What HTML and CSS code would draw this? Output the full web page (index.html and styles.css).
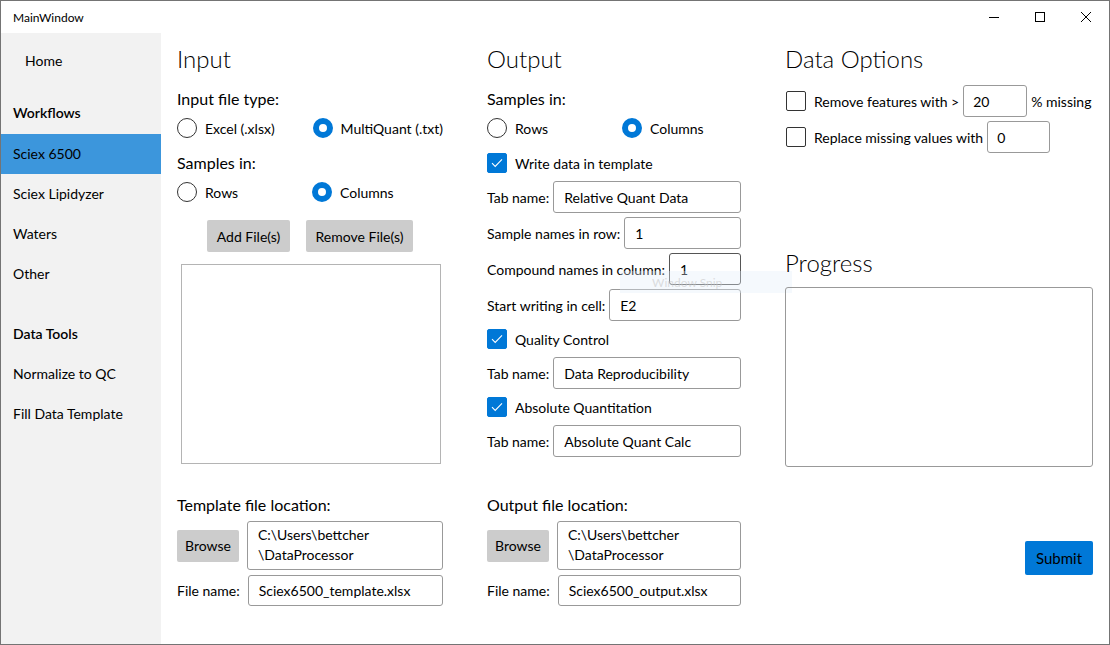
FILE: index.html
```html
<!DOCTYPE html>
<html lang="en">
<head>
<meta charset="utf-8">
<title>MainWindow</title>
<link rel="stylesheet" href="styles.css">
</head>
<body>
<div class="window">
  <header class="titlebar">
    <span class="title">MainWindow</span>
    <div class="caption-buttons">
      <span class="cap-btn"><svg width="10" height="10" viewBox="0 0 10 10"><path d="M0 5.5H10" stroke="#000" stroke-width="1"/></svg></span>
      <span class="cap-btn"><svg width="10" height="10" viewBox="0 0 10 10"><rect x="0.5" y="0.5" width="9" height="9" fill="none" stroke="#000" stroke-width="1"/></svg></span>
      <span class="cap-btn"><svg width="10" height="10" viewBox="0 0 10 10"><path d="M0 0L10 10M10 0L0 10" stroke="#000" stroke-width="1"/></svg></span>
    </div>
  </header>
  <div class="body">
    <nav class="sidebar">
      <div class="nav-item nav-home">Home</div>
      <div class="nav-group">Workflows</div>
      <div class="nav-item nav-selected">Sciex 6500</div>
      <div class="nav-item">Sciex Lipidyzer</div>
      <div class="nav-item">Waters</div>
      <div class="nav-item">Other</div>
      <div class="nav-group nav-group-2">Data Tools</div>
      <div class="nav-item">Normalize to QC</div>
      <div class="nav-item">Fill Data Template</div>
    </nav>
    <main class="content">
      <section class="col col-input">
        <div class="top">
          <h1 class="heading">Input</h1>
          <div class="label-lg first-label">Input file type:</div>
          <div class="radio-row">
            <label class="radio in-w1"><span class="radio-dot"></span>Excel (.xlsx)</label>
            <label class="radio"><span class="radio-dot checked"></span>MultiQuant (.txt)</label>
          </div>
          <div class="label-lg second-label">Samples in:</div>
          <div class="radio-row">
            <label class="radio in-w2"><span class="radio-dot"></span>Rows</label>
            <label class="radio"><span class="radio-dot checked"></span>Columns</label>
          </div>
          <div class="button-row">
            <button class="btn btn-add">Add File(s)</button>
            <button class="btn btn-remove">Remove File(s)</button>
          </div>
          <div class="listbox"></div>
        </div>
        <div class="bottom">
          <div class="label-lg">Template file location:</div>
          <div class="browse-row">
            <button class="btn btn-browse">Browse</button>
            <div class="textbox path-box">C:\Users\bettcher<br>\DataProcessor</div>
          </div>
          <div class="field-row file-row">
            <span class="field-label">File name:</span>
            <div class="textbox">Sciex6500_template.xlsx</div>
          </div>
        </div>
      </section>

      <section class="col col-output">
        <div class="top">
          <h1 class="heading">Output</h1>
          <div class="label-lg first-label">Samples in:</div>
          <div class="radio-row">
            <label class="radio out-w1"><span class="radio-dot"></span>Rows</label>
            <label class="radio"><span class="radio-dot checked"></span>Columns</label>
          </div>
          <label class="check check-first"><span class="check-box checked"><svg width="12" height="10" viewBox="0 0 12 10"><path d="M1 5.2L4.2 8.4L11 1.4" fill="none" stroke="#fff" stroke-width="1.1"/></svg></span>Write data in template</label>
          <div class="field-row gap6">
            <span class="field-label">Tab name:</span>
            <div class="textbox">Relative Quant Data</div>
          </div>
          <div class="field-row gap4">
            <span class="field-label">Sample names in row:</span>
            <div class="textbox">1</div>
          </div>
          <div class="field-row gap4">
            <span class="field-label">Compound names in column:</span>
            <div class="textbox focused">1</div>
          </div>
          <div class="field-row gap4">
            <span class="field-label">Start writing in cell:</span>
            <div class="textbox">E2</div>
          </div>
          <label class="check check-mid"><span class="check-box checked"><svg width="12" height="10" viewBox="0 0 12 10"><path d="M1 5.2L4.2 8.4L11 1.4" fill="none" stroke="#fff" stroke-width="1.1"/></svg></span>Quality Control</label>
          <div class="field-row gap6">
            <span class="field-label">Tab name:</span>
            <div class="textbox">Data Reproducibility</div>
          </div>
          <label class="check check-mid"><span class="check-box checked"><svg width="12" height="10" viewBox="0 0 12 10"><path d="M1 5.2L4.2 8.4L11 1.4" fill="none" stroke="#fff" stroke-width="1.1"/></svg></span>Absolute Quantitation</label>
          <div class="field-row gap6">
            <span class="field-label">Tab name:</span>
            <div class="textbox">Absolute Quant Calc</div>
          </div>
        </div>
        <div class="bottom">
          <div class="label-lg">Output file location:</div>
          <div class="browse-row">
            <button class="btn btn-browse">Browse</button>
            <div class="textbox path-box">C:\Users\bettcher<br>\DataProcessor</div>
          </div>
          <div class="field-row file-row">
            <span class="field-label">File name:</span>
            <div class="textbox">Sciex6500_output.xlsx</div>
          </div>
        </div>
        <div class="snip-overlay"><span>Window Snip</span></div>
      </section>

      <section class="col col-data">
        <h1 class="heading">Data Options</h1>
        <div class="option-row option-first">
          <span class="check-box"></span>
          <span class="option-text">Remove features with &gt;</span>
          <div class="textbox small-box w64">20</div>
          <span class="option-after">% missing</span>
        </div>
        <div class="option-row option-second">
          <span class="check-box"></span>
          <span class="option-text">Replace missing values with</span>
          <div class="textbox small-box w63">0</div>
        </div>
        <h1 class="heading progress-heading">Progress</h1>
        <div class="progress-box"></div>
        <button class="btn-submit">Submit</button>
      </section>
    </main>
  </div>
</div>
</body>
</html>
```

FILE: styles.css
```css
* { box-sizing: border-box; }

html, body {
  margin: 0;
  padding: 0;
  background: #ffffff;
}

body {
  font-family: "Segoe UI", Lato, "Open Sans", sans-serif;
  font-size: 14px;
  color: #000;
}

.window {
  width: 1110px;
  height: 645px;
  border: 1px solid #747474;
  display: flex;
  flex-direction: column;
  background: #fff;
  overflow: hidden;
}

.titlebar {
  height: 32px;
  display: flex;
  align-items: center;
  justify-content: space-between;
  flex-shrink: 0;
}

.title {
  font-size: 12px;
  padding-left: 12px;
}

.caption-buttons {
  display: flex;
  height: 32px;
}

.cap-btn {
  width: 46px;
  height: 32px;
  display: flex;
  align-items: center;
  justify-content: center;
}

.cap-btn svg { display: block; }

.body {
  flex: 1;
  display: flex;
  min-height: 0;
}

/* Sidebar */
.sidebar {
  width: 160px;
  background: #f2f2f2;
  padding-top: 8px;
  flex-shrink: 0;
}

.nav-item, .nav-group {
  height: 40px;
  display: flex;
  align-items: center;
  padding-left: 12px;
  padding-bottom: 2px;
}

.nav-home {
  padding-left: 24px;
}

.nav-group {
  font-weight: 600;
  margin-top: 12px;
  margin-bottom: 1px;
}

.nav-group-2 {
  margin-top: 20px;
  margin-bottom: 0;
}

.nav-selected {
  background: #3c96dc;
}

/* Content */
.content {
  flex: 1;
  display: flex;
  padding: 0 16px 0 16px;
  gap: 44px;
}

.col {
  display: flex;
  flex-direction: column;
  padding-top: 10px;
  padding-bottom: 38px;
  position: relative;
}

.col-input { width: 266px; }
.col-output { width: 254px; }
.col-data { width: 308px; padding-bottom: 0; }

.col .bottom {
  margin-top: auto;
  display: flex;
  flex-direction: column;
}

.heading {
  margin: 0;
  height: 32px;
  line-height: 32px;
  font-size: 24px;
  font-weight: 300;
}

.label-lg {
  font-size: 16px;
  height: 24px;
  line-height: 24px;
}

.first-label { margin-top: 12px; }
.second-label { margin-top: 9px; }

.radio-row {
  display: flex;
  height: 28px;
  align-items: center;
  margin-top: 3px;
}

.radio {
  display: flex;
  align-items: center;
  gap: 8px;
  white-space: nowrap;
}

.in-w1 { width: 137px; }
.in-w2 { width: 135px; }
.out-w1 { width: 135px; }

.radio-dot {
  width: 20px;
  height: 20px;
  border-radius: 50%;
  border: 1px solid #333;
  background: #fff;
  flex-shrink: 0;
}

.radio-dot.checked {
  border: 6px solid #0078d7;
  background: #fff;
}

.button-row {
  margin-top: 14px;
  display: flex;
  justify-content: center;
  gap: 16px;
}

.btn {
  height: 32px;
  background: #cccccc;
  border: none;
  border-radius: 2px;
  font-family: inherit;
  font-size: 14px;
  color: #000;
  padding: 0;
  white-space: nowrap;
}

.btn-add { width: 83px; }
.btn-remove { width: 107px; }

.listbox {
  margin: 12px 2px 0 4px;
  height: 200px;
  border: 1px solid #b4b4b4;
}

.browse-row {
  margin-top: 4px;
  display: flex;
  align-items: center;
  gap: 8px;
}

.btn-browse {
  width: 62px;
}

.textbox {
  flex: 1;
  height: 32px;
  border: 1px solid #999;
  border-radius: 3px;
  padding: 0 10px;
  display: flex;
  align-items: center;
  background: #fff;
  white-space: nowrap;
}

.textbox.focused { border-color: #555; }

.path-box {
  height: 49px;
  display: block;
  padding-top: 3px;
  line-height: 20px;
}

.field-row {
  display: flex;
  align-items: center;
  gap: 4px;
}

.field-label { white-space: nowrap; }

.file-row {
  margin-top: 5px;
  gap: 8px;
}
.file-row .textbox { height: 31px; }

.gap4 { margin-top: 4px; }
.gap6 { margin-top: 6px; }

.check {
  display: flex;
  align-items: center;
  gap: 8px;
  height: 24px;
}

.check-first { margin-top: 9px; }
.check-mid { margin-top: 6px; }

.check-box {
  width: 20px;
  height: 20px;
  border: 1px solid #333;
  border-radius: 2px;
  flex-shrink: 0;
  display: flex;
  align-items: center;
  justify-content: center;
  background: #fff;
}

.check-box.checked {
  background: #0078d7;
  border-color: #0078d7;
}

.option-row {
  display: flex;
  align-items: center;
  height: 32px;
}

.option-first { margin-top: 10px; }
.option-second { margin-top: 4px; }

.option-row .check-box { margin-left: 1px; }

.option-text {
  margin-left: 8px;
  margin-right: 4px;
  white-space: nowrap;
}

.option-after {
  margin-left: 4px;
  white-space: nowrap;
}

.small-box { flex: none; padding-left: 9px; }
.w64 { width: 64px; }
.w63 { width: 63px; }

.progress-heading { margin-top: 94px; }

.progress-box {
  margin-top: 8px;
  height: 180px;
  border: 1px solid #999;
  border-radius: 3px;
}

.btn-submit {
  margin-top: 74px;
  align-self: flex-end;
  width: 68px;
  height: 34px;
  border: none;
  border-radius: 2px;
  background: #0078d7;
  color: #000;
  font-family: inherit;
  font-size: 15px;
}

.snip-overlay {
  position: absolute;
  left: 133px;
  top: 238px;
  width: 172px;
  height: 22px;
  background: rgba(225, 238, 250, 0.35);
  display: flex;
  align-items: center;
  padding-left: 32px;
  font-size: 12px;
  color: rgba(200, 200, 200, 0.6);
  pointer-events: none;
}
```
